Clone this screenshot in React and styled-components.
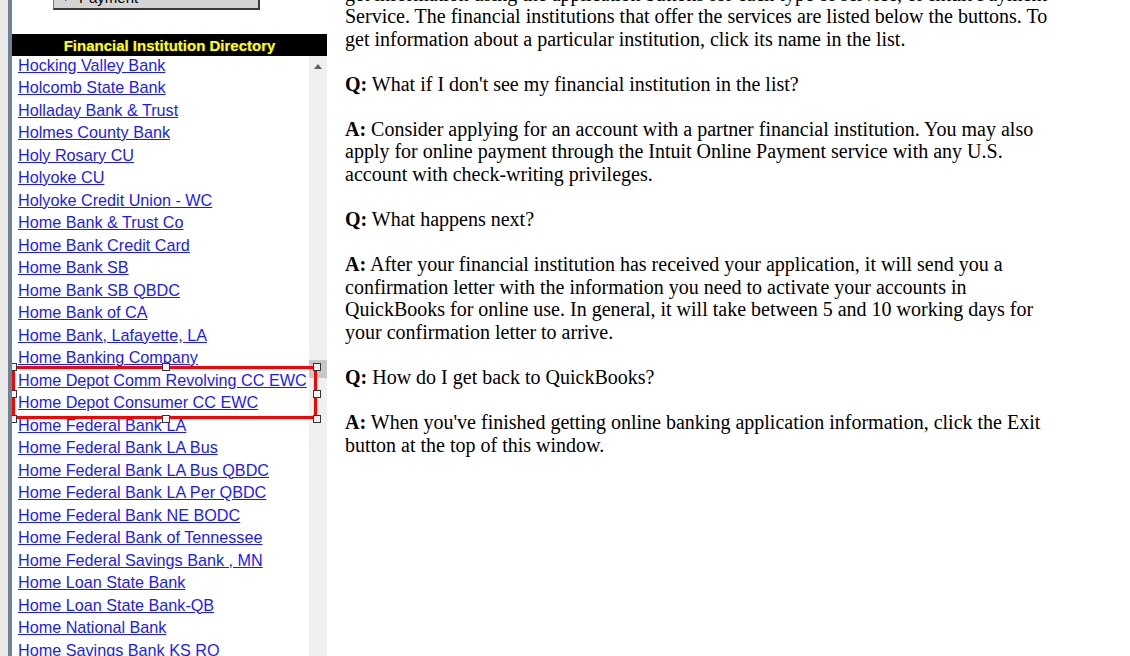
import React from "react";
import styled, { createGlobalStyle } from "styled-components";

const Global = createGlobalStyle`
  html, body { margin: 0; padding: 0; background: #ffffff; }
  body { width: 1130px; height: 656px; overflow: hidden; }
  #root { height: 656px; }
`;

const Page = styled.div`
  display: flex;
  height: 656px;
  overflow: hidden;
  background: #ffffff;
`;

const Gutter = styled.div`
  width: 8px;
  flex: none;
  background: #e9e9e9;
`;

const Rule = styled.div`
  width: 4px;
  flex: none;
  background: #6e8296;
`;

const Sidebar = styled.aside`
  width: 315px;
  flex: none;
  display: flex;
  flex-direction: column;
  height: 656px;
`;

const ButtonArea = styled.div`
  height: 34px;
  flex: none;
  padding-left: 41px;
`;

const NavButton = styled.div`
  box-sizing: border-box;
  width: 207px;
  height: 30px;
  margin-top: -20px;
  background: #d4d4d4;
  border: 1px solid #7a7a7a;
  border-right: 2px solid #3a3a3a;
  border-bottom: 2px solid #3a3a3a;
  display: flex;
  align-items: flex-end;
  gap: 7px;
  padding: 0 0 2px 11px;
  font: 15px/16px "Liberation Sans", Arial, sans-serif;
  color: #000;
`;

const PlayIcon = styled.span`
  width: 0;
  height: 0;
  margin-bottom: 5px;
  border-top: 4px solid transparent;
  border-bottom: 4px solid transparent;
  border-left: 7px solid #2020c0;
`;

const Header = styled.div`
  box-sizing: border-box;
  height: 22px;
  flex: none;
  background: #000;
  color: #ffff00;
  font: bold 15px/20px "Liberation Sans", Arial, sans-serif;
  padding-top: 2px;
  text-align: center;
  text-shadow: 0 0 1px #7a7a00;
`;

const ListFrame = styled.div`
  position: relative;
  flex: 1;
  display: flex;
  overflow: hidden;
  background: #fff;
`;

const ListBody = styled.div`
  flex: 1;
  overflow: hidden;
  padding-left: 6px;
`;

const Items = styled.div`
  margin-top: -2.5px;
  display: flex;
  flex-direction: column;
`;

const Item = styled.a`
  display: block;
  font: 16.2px/22.5px "Liberation Sans", Arial, sans-serif;
  color: #1a1aff;
  text-decoration: underline;
  white-space: nowrap;
`;

const Scrollbar = styled.div`
  width: 18px;
  flex: none;
  background: #f0f0f0;
  display: flex;
  flex-direction: column;
  align-items: center;
`;

const ArrowButton = styled.div`
  height: 17px;
  width: 18px;
  display: flex;
  align-items: center;
  justify-content: center;
  &::after {
    content: "";
    margin-top: 4px;
    border-left: 4px solid transparent;
    border-right: 4px solid transparent;
    border-bottom: 5px solid #606060;
  }
`;

const Thumb = styled.div`
  width: 18px;
  height: 18px;
  margin-top: 287px;
  background: #c8c8c8;
`;

const Selection = styled.div`
  position: absolute;
  left: 0;
  top: 310px;
  width: 305px;
  height: 53px;
  box-sizing: border-box;
  border: 3px solid #ff0000;
  pointer-events: none;
`;

const Handle = styled.span`
  position: absolute;
  width: 8px;
  height: 8px;
  box-sizing: border-box;
  background: #f2f2f2;
  border: 1px solid #333;
  left: ${(p) => p.$x};
  top: ${(p) => p.$y};
`;

const Main = styled.main`
  flex: none;
  margin-left: 18px;
  width: 712px;
  margin-top: -17.5px;
  font: 20px/22.56px "Liberation Serif", "Times New Roman", serif;
  color: #000;
`;

const Para = styled.p`
  margin: 0 0 22.56px;
`;

const banks = [
  "Hocking Valley Bank",
  "Holcomb State Bank",
  "Holladay Bank & Trust",
  "Holmes County Bank",
  "Holy Rosary CU",
  "Holyoke CU",
  "Holyoke Credit Union - WC",
  "Home Bank & Trust Co",
  "Home Bank Credit Card",
  "Home Bank SB",
  "Home Bank SB QBDC",
  "Home Bank of CA",
  "Home Bank, Lafayette, LA",
  "Home Banking Company",
  "Home Depot Comm Revolving CC EWC",
  "Home Depot Consumer CC EWC",
  "Home Federal Bank LA",
  "Home Federal Bank LA Bus",
  "Home Federal Bank LA Bus QBDC",
  "Home Federal Bank LA Per QBDC",
  "Home Federal Bank NE BODC",
  "Home Federal Bank of Tennessee",
  "Home Federal Savings Bank , MN",
  "Home Loan State Bank",
  "Home Loan State Bank-QB",
  "Home National Bank",
  "Home Savings Bank KS RO",
];

const handles = [
  ["-6px", "-6px"],
  ["146.5px", "-6px"],
  ["297.5px", "-6px"],
  ["-6px", "20.5px"],
  ["297.5px", "20.5px"],
  ["-6px", "45.5px"],
  ["146.5px", "45.5px"],
  ["297.5px", "45.5px"],
];

export default function App() {
  return (
    <>
      <Global />
      <Page>
        <Gutter />
        <Rule />
        <Sidebar>
          <ButtonArea>
            <NavButton>
              <PlayIcon />
              <span>Payment</span>
            </NavButton>
          </ButtonArea>
          <Header>Financial Institution Directory</Header>
          <ListFrame>
            <ListBody>
              <Items>
                {banks.map((b) => (
                  <Item key={b} href="#">
                    {b}
                  </Item>
                ))}
              </Items>
            </ListBody>
            <Scrollbar>
              <ArrowButton />
              <Thumb />
            </Scrollbar>
            <Selection>
              {handles.map(([x, y], i) => (
                <Handle key={i} $x={x} $y={y} />
              ))}
            </Selection>
          </ListFrame>
        </Sidebar>
        <Main>
          <Para>
            get information using the application buttons for each type of service, or Intuit Payment
            <br />
            Service. The financial institutions that offer the services are listed below the
            buttons. To get information about a particular institution, click its name in the list.
          </Para>
          <Para>
            <b>Q:</b> What if I don't see my financial institution in the list?
          </Para>
          <Para>
            <b>A:</b> Consider applying for an account with a partner financial institution. You
            may also apply for online payment through the Intuit Online Payment service with any
            U.S. account with check-writing privileges.
          </Para>
          <Para>
            <b>Q:</b> What happens next?
          </Para>
          <Para>
            <b>A:</b> After your financial institution has received your application, it will send
            you a confirmation letter with the information you need to activate your accounts in
            QuickBooks for online use. In general, it will take between 5 and 10 working days for
            your confirmation letter to arrive.
          </Para>
          <Para>
            <b>Q:</b> How do I get back to QuickBooks?
          </Para>
          <Para>
            <b>A:</b> When you've finished getting online banking application information, click
            the Exit button at the top of this window.
          </Para>
        </Main>
      </Page>
    </>
  );
}
